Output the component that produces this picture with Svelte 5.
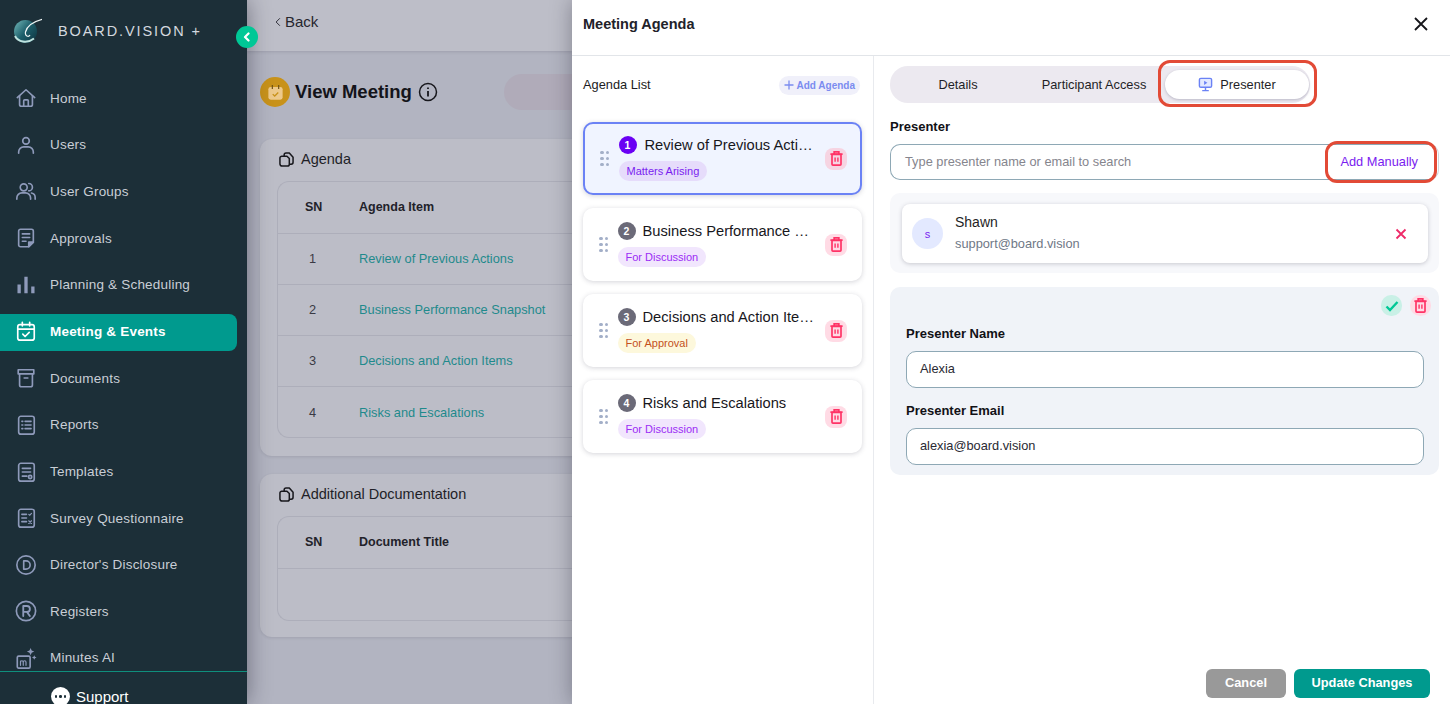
<script>
	const icons = {
		home: '<path d="M2.500 11.500 12 3l9.500 8.500"/><path d="M5 9.500V19a2 2 0 0 0 2 2h10a2 2 0 0 0 2-2V9.500"/><path d="M9.500 21v-6a1 1 0 0 1 1-1h3a1 1 0 0 1 1 1v6"/>',
		user: '<circle cx="12" cy="7.500" r="3.600"/><path d="M4 21v-1.500A5.500 5.500 0 0 1 9.500 14h5a5.500 5.500 0 0 1 5.500 5.500V21"/>',
		group: '<circle cx="9.500" cy="8" r="3.800"/><path d="M2 21v-1.500A5.500 5.500 0 0 1 7.500 14h4a5.500 5.500 0 0 1 5.500 5.500V21"/><path d="M15 3.800a4 4 0 0 1 0 8"/><path d="M18 14.200a5 5 0 0 1 4 5V21"/>',
		approval: '<path d="M15 21.500H6a2 2 0 0 1-2-2v-15a2 2 0 0 1 2-2h12a2 2 0 0 1 2 2V16.500z"/><path d="M8 7.500h8M8 11.500h8M8 15.500h4"/><path d="M15 21.500v-5h5z" fill="currentColor"/>',
		bars: '<path d="M4.500 11.500V21M12 3v18M19.500 13.500V21" stroke-width="3.600" stroke-linecap="butt"/>',
		calendar: '<rect x="3" y="5" width="18" height="17" rx="2.500"/><path d="M3 10h18M8 2.500v4M16 2.500v4"/><path d="m8.500 15.500 2.500 2.500 4.500-4.500"/>',
		archive: '<path d="M3.500 3h17v4.500h-17z"/><path d="M5 7.500v12a2 2 0 0 0 2 2h10a2 2 0 0 0 2-2v-12"/><path d="M10 12h4"/>',
		list: '<rect x="4" y="2.500" width="17" height="19.500" rx="2.500"/><path d="M11 8h6.500M11 12h6.500M11 16h6.500M7.500 8h1M7.500 12h1M7.500 16h1"/>',
		template: '<rect x="4" y="2.500" width="17" height="19.500" rx="2.500"/><path d="M8 8h9M8 12h9M8 16.500h5"/><circle cx="16.500" cy="17.500" r="1.800"/>',
		survey: '<rect x="4" y="2.500" width="17" height="19.500" rx="2.500"/><path d="M7.500 8h5M7.500 12h5M7.500 16h5"/><path d="m15 8 1 1 2-2M15 15l3 3M18 15l-3 3" stroke-width="1.200"/>',
		disclosure: '<circle cx="12" cy="12" r="10"/><path d="M9.500 7.500v9h2.500a4.500 4.500 0 0 0 0-9z"/>',
		register: '<circle cx="12" cy="12" r="10.500"/><path d="M9 17.500v-11h4a3.200 3.200 0 0 1 0 6.500H9M13 13l3.200 4.500" stroke-width="2"/>',
		minutes: '<rect x="2.500" y="10" width="14" height="13" rx="1.500"/><path d="M6 20v-4.500M6 16.500a1.500 1.500 0 0 1 3 0V20M9 16.500a1.500 1.500 0 0 1 3 0V20" stroke-width="1.300"/><path d="m17 1 1.200 2.800L21 5l-2.800 1.200L17 9l-1.200-2.800L13 5l2.800-1.200zM21 9l.8 1.700 1.700.8-1.700.8-.8 1.700-.8-1.700-1.700-.8 1.700-.8z" fill="currentColor" stroke="none"/>'
	};

	const nav = [
		{ label: 'Home', icon: 'home' },
		{ label: 'Users', icon: 'user' },
		{ label: 'User Groups', icon: 'group' },
		{ label: 'Approvals', icon: 'approval' },
		{ label: 'Planning & Scheduling', icon: 'bars' },
		{ label: 'Meeting & Events', icon: 'calendar', active: true },
		{ label: 'Documents', icon: 'archive' },
		{ label: 'Reports', icon: 'list' },
		{ label: 'Templates', icon: 'template' },
		{ label: 'Survey Questionnaire', icon: 'survey' },
		{ label: "Director's Disclosure", icon: 'disclosure' },
		{ label: 'Registers', icon: 'register' },
		{ label: 'Minutes AI', icon: 'minutes' }
	];

	const agenda = [
		{ title: 'Review of Previous Actions', tag: 'Matters Arising', tone: 'arising', active: true },
		{ title: 'Business Performance Snapshot', tag: 'For Discussion', tone: 'discuss' },
		{ title: 'Decisions and Action Items', tag: 'For Approval', tone: 'approve' },
		{ title: 'Risks and Escalations', tag: 'For Discussion', tone: 'discuss' }
	];
</script>

{#snippet trash()}
	<svg viewBox="0 0 16 16" width="15" height="15" fill="none" stroke="currentColor" stroke-width="1.800">
		<path d="M1.500 3.300h13M5.500 3V1h5v2" />
		<rect x="3.200" y="3.500" width="9.600" height="11.500" rx="1" />
		<path d="M6.500 7v4.500M9.500 7v4.500" stroke-width="1.500" />
	</svg>
{/snippet}

{#snippet docs()}
	<svg viewBox="0 0 16 16" width="15" height="15" fill="none" stroke="#17171c" stroke-width="1.600" stroke-linejoin="round">
		<path d="M5.500 4.500V3a2 2 0 0 1 2-2h3.500l4 4.500V11a2 2 0 0 1-2 2h-2" />
		<path d="M3 4.500h5.500L11 7v6a2 2 0 0 1-2 2H3.500A2.500 2.500 0 0 1 1 12.500v-6a2 2 0 0 1 2-2z" />
	</svg>
{/snippet}

<div class="page">
	<aside class="sidebar">
		<div class="brand">
			<svg class="logo" viewBox="0 0 30 30" width="30" height="30">
				<defs>
					<linearGradient id="lg" x1="0" y1="0.100" x2="0.900" y2="0.800">
						<stop offset="0" stop-color="#6db3b4" />
						<stop offset="0.55" stop-color="#1d5f6b" />
						<stop offset="1" stop-color="#123f4b" />
					</linearGradient>
				</defs>
				<circle cx="13.500" cy="15.500" r="11.500" fill="url(#lg)" />
				<path d="M3 20c3 6 12 8 19 2.500" fill="none" stroke="#bfe3df" stroke-width="2" />
				<path d="M31 3C23 5 15 9 13.500 16c-.8 4 3 5.500 4.500 3" fill="none" stroke="#eef5f5" stroke-width="1.200" />
			</svg>
			<span class="brand-name">BOARD.VISION +</span>
		</div>
		<nav class="nav">
			{#each nav as item}
				<div class="nav-item" class:active={item.active}>
					<svg class="nav-icon" viewBox="0 0 24 24" width="22" height="22" fill="none" stroke="currentColor" stroke-width="1.800" stroke-linecap="round" stroke-linejoin="round">
						{@html icons[item.icon]}
					</svg>
					<span>{item.label}</span>
				</div>
			{/each}
		</nav>
		<div class="support">
			<span class="support-bubble"><i></i><i></i><i></i></span>
			<span>Support</span>
		</div>
	</aside>

	<button class="collapse" aria-label="Collapse menu">
		<svg viewBox="0 0 10 10" width="10" height="10" fill="none" stroke="#fff" stroke-width="2.200" stroke-linecap="round" stroke-linejoin="round">
			<path d="M6.500 1.500 3 5l3.500 3.500" />
		</svg>
	</button>

	<main class="main">
		<div class="topbar">
			<svg viewBox="0 0 8 12" width="6" height="10" fill="none" stroke="#2b2b35" stroke-width="1.300"><path d="M6.500 1 1.500 6l5 5" /></svg>
			<span>Back</span>
		</div>
		<div class="content">
			<div class="title-row">
				<span class="title-icon">
					<svg viewBox="0 0 24 24" width="19" height="19">
						<rect x="3" y="5" width="18" height="16" rx="3" fill="#edc98a" />
						<path d="M8 2.500v5M16 2.500v5" stroke="#6f5216" stroke-width="1.500" />
						<path d="m8.500 14 2.500 2.500 4.500-4.500" fill="none" stroke="#c8921a" stroke-width="1.600" />
					</svg>
				</span>
				<h1>View Meeting</h1>
				<svg class="info" viewBox="0 0 20 20" width="20" height="20" fill="none" stroke="#17171c" stroke-width="1.500">
					<circle cx="10" cy="10" r="8.500" />
					<path d="M10 9v5.500M10 5.500v1.500" stroke-width="1.800" />
				</svg>
				<span class="title-pill"></span>
			</div>

			<section class="panel">
				<header class="panel-head">{@render docs()}<span>Agenda</span></header>
				<div class="table">
					<div class="row head"><span class="sn">SN</span><span class="item">Agenda Item</span></div>
					{#each agenda as row, i}
						<div class="row"><span class="sn num">{i + 1}</span><span class="item link">{row.title}</span></div>
					{/each}
				</div>
			</section>

			<section class="panel second">
				<header class="panel-head">{@render docs()}<span>Additional Documentation</span></header>
				<div class="table">
					<div class="row head"><span class="sn">SN</span><span class="item">Document Title</span></div>
					<div class="row empty"></div>
				</div>
			</section>
		</div>
	</main>

	<aside class="drawer">
		<header class="drawer-head">
			<h2>Meeting Agenda</h2>
			<svg viewBox="0 0 14 14" width="14" height="14" fill="none" stroke="#15151a" stroke-width="1.800"><path d="m1 1 12 12M13 1 1 13" /></svg>
		</header>
		<div class="drawer-body">
			<div class="agenda-col">
				<div class="agenda-top">
					<span class="agenda-heading">Agenda List</span>
					<button class="add-agenda">
						<svg viewBox="0 0 10 10" width="10" height="10" fill="none" stroke="#7b8cf0" stroke-width="1.300"><path d="M5 .5v9M.5 5h9" /></svg>
						Add Agenda
					</button>
				</div>
				<div class="agenda-list">
					{#each agenda as row, i}
						<div class="agenda-card" class:active={row.active}>
							<span class="grip"><i></i><i></i><i></i><i></i><i></i><i></i></span>
							<div class="agenda-text">
								<div class="agenda-title">
									<span class="badge">{i + 1}</span>
									<span class="agenda-name">{row.title}</span>
								</div>
								<span class="tag {row.tone}">{row.tag}</span>
							</div>
							<button class="icon-btn del" aria-label="Delete">{@render trash()}</button>
						</div>
					{/each}
				</div>
			</div>

			<div class="detail-col">
				<div class="tabs">
					<span class="tab details">Details</span>
					<span class="tab access">Participant Access</span>
					<span class="tab current">
						<svg viewBox="0 0 16 16" width="15" height="15" fill="none" stroke="#6b82f5" stroke-width="1.500">
							<rect x="1.500" y="1.500" width="13" height="9.500" rx="1.500" fill="#e3e9ff" />
							<path d="M8 11v3M4.500 14.500h7" />
							<path d="M6.500 4v4.500L10 6.200z" fill="#6b82f5" stroke="none" />
						</svg>
						Presenter
					</span>
					<span class="mark mark-tab"></span>
				</div>

				<div class="field-label top">Presenter</div>
				<div class="search">
					<span class="placeholder">Type presenter name or email to search</span>
					<span class="manual">Add Manually</span>
					<span class="mark mark-manual"></span>
				</div>

				<div class="chosen">
					<div class="person">
						<span class="avatar">s</span>
						<div class="person-text">
							<span class="person-name">Shawn</span>
							<span class="person-mail">support@board.vision</span>
						</div>
						<svg viewBox="0 0 12 12" width="12" height="12" fill="none" stroke="#ee2a68" stroke-width="1.800"><path d="m1.500 1.500 9 9M10.500 1.500l-9 9" /></svg>
					</div>
				</div>

				<div class="manual-form">
					<div class="form-actions">
						<button class="icon-btn ok" aria-label="Confirm">
							<svg viewBox="0 0 14 14" width="14" height="14" fill="none" stroke="#00c896" stroke-width="2.400"><path d="m1.500 7.500 3.500 3.500 7.500-8" /></svg>
						</button>
						<button class="icon-btn del" aria-label="Delete">{@render trash()}</button>
					</div>
					<div class="field-label">Presenter Name</div>
					<div class="input">Alexia</div>
					<div class="field-label second">Presenter Email</div>
					<div class="input">alexia@board.vision</div>
				</div>

				<div class="footer">
					<button class="btn cancel">Cancel</button>
					<button class="btn save">Update Changes</button>
				</div>
			</div>
		</div>
	</aside>
</div>

<style>
	:global(body) {
		margin: 0;
		font-family: "Liberation Sans", Arial, sans-serif;
	}
	.page {
		position: relative;
		display: flex;
		width: 1450px;
		height: 704px;
		overflow: hidden;
		background: #b2b4c1;
	}
	button {
		font-family: inherit;
		border: none;
		padding: 0;
	}

	/* sidebar */
	.sidebar {
		position: relative;
		z-index: 2;
		flex: 0 0 247px;
		display: flex;
		flex-direction: column;
		background: #1c2f38;
		box-shadow: 0 0 22px rgba(20, 20, 35, 0.45);
	}
	.brand {
		flex: 0 0 75px;
		display: flex;
		align-items: flex-start;
		padding: 16px 0 0 12px;
		box-sizing: border-box;
	}
	.brand-name {
		margin: 7px 0 0 16px;
		font-size: 14.500px;
		letter-spacing: 1.900px;
		color: #d3d8df;
	}
	.nav {
		flex: 1;
		min-height: 0;
		overflow: hidden;
	}
	.nav-item {
		display: flex;
		align-items: center;
		gap: 13px;
		height: 46.600px;
		padding-left: 15px;
		margin-right: 10px;
		font-size: 13.500px;
		letter-spacing: 0.200px;
		color: #c9ced6;
		box-sizing: border-box;
	}
	.nav-icon {
		color: #8e9aba;
		flex: none;
	}
	.nav-item.active {
		height: 37px;
		margin: 6px 10px 4.100px 0;
		padding-bottom: 2px;
		background: #009a8e;
		border-radius: 0 8px 8px 0;
		color: #fff;
		font-weight: 700;
	}
	.nav-item.active .nav-icon {
		color: #fff;
	}
	.support {
		flex: 0 0 33px;
		display: flex;
		align-items: center;
		gap: 6px;
		padding: 17px 0 0 51px;
		box-sizing: border-box;
		border-top: 1px solid #0f8f7d;
		font-size: 15px;
		color: #fff;
		line-height: 17px;
		overflow: hidden;
	}
	.support-bubble {
		display: flex;
		align-items: center;
		justify-content: center;
		gap: 2px;
		width: 19px;
		height: 19px;
		border-radius: 50%;
		background: #fff;
	}
	.support-bubble i {
		width: 2.500px;
		height: 2.500px;
		border-radius: 50%;
		background: #1c2f38;
	}
	.collapse {
		position: absolute;
		z-index: 3;
		left: 236px;
		top: 26px;
		display: flex;
		align-items: center;
		justify-content: center;
		width: 22px;
		height: 22px;
		border-radius: 50%;
		background: #00c896;
	}

	/* dimmed page behind the drawer */
	.main {
		flex: 1;
		min-width: 0;
		overflow: hidden;
	}
	.topbar {
		display: flex;
		align-items: center;
		gap: 4px;
		height: 51px;
		padding: 0 0 8px 28px;
		box-sizing: border-box;
		background: #bdbec8;
		box-shadow: 0 1px 3px rgba(40, 40, 60, 0.15);
		font-size: 15px;
		color: #26262e;
	}
	.content {
		padding: 23px 0 0 13px;
		width: 700px;
	}
	.title-row {
		display: flex;
		align-items: center;
		height: 36px;
		margin-bottom: 29px;
	}
	.title-icon {
		display: flex;
		align-items: center;
		justify-content: center;
		width: 30px;
		height: 30px;
		border-radius: 50%;
		background: #c8921a;
		margin-right: 5px;
	}
	h1 {
		margin: 0;
		font-size: 18.500px;
		font-weight: 700;
		color: #14141a;
	}
	.info {
		margin-left: 6px;
	}
	.title-pill {
		width: 200px;
		height: 36px;
		margin-left: 66px;
		border-radius: 18px;
		background: #b0abb9;
	}
	.panel {
		height: 317px;
		padding: 0 0 0 17px;
		box-sizing: border-box;
		border-radius: 12px 0 0 12px;
		background: #bcbdc7;
		box-shadow: 0 1px 3px rgba(40, 40, 60, 0.12);
	}
	.panel.second {
		height: 163px;
		margin-top: 18px;
	}
	.panel-head {
		display: flex;
		align-items: center;
		gap: 7px;
		height: 42px;
		padding: 0 0 2px 2px;
		box-sizing: border-box;
		font-size: 14.500px;
		color: #1f1f27;
	}
	.table {
		border: 1px solid #adaeba;
		border-right: none;
		border-radius: 12px 0 0 12px;
	}
	.row {
		display: flex;
		align-items: center;
		height: 51px;
		padding-bottom: 2px;
		border-top: 1px solid #adaeba;
		font-size: 12.800px;
		box-sizing: border-box;
	}
	.row:first-child {
		border-top: none;
	}
	.row:last-child {
		padding-bottom: 0;
	}
	.row.head {
		padding-bottom: 2px;
		font-size: 12.500px;
		font-weight: 700;
		color: #22222a;
	}
	.row.empty {
		height: 52px;
	}
	.sn {
		width: 27px;
		margin-left: 27px;
		flex: none;
	}
	.num {
		padding-left: 4px;
		box-sizing: border-box;
		color: #3a3a44;
	}
	.item {
		margin-left: 27px;
	}
	.link {
		color: #1f8a8c;
	}

	/* drawer */
	.drawer {
		position: relative;
		z-index: 2;
		flex: 0 0 878px;
		display: flex;
		flex-direction: column;
		background: #fff;
		box-shadow: 0 0 20px rgba(20, 20, 35, 0.35);
	}
	.drawer-head {
		flex: 0 0 56px;
		display: flex;
		align-items: center;
		justify-content: space-between;
		padding: 0 22px 8px 11px;
		box-sizing: border-box;
		border-bottom: 1px solid #e2e5e9;
	}
	h2 {
		margin: 0;
		font-size: 14.500px;
		font-weight: 700;
		color: #22222a;
	}
	.drawer-body {
		flex: 1;
		display: flex;
		min-height: 0;
	}
	.agenda-col {
		flex: 0 0 302px;
		padding: 19px 11px 0 11px;
		box-sizing: border-box;
		border-right: 1px solid #e8eaee;
	}
	.agenda-top {
		display: flex;
		align-items: center;
		justify-content: space-between;
		height: 20px;
		margin-bottom: 27px;
		padding-right: 2px;
		font-size: 12.800px;
		color: #1c1c22;
	}
	.agenda-heading {
		padding-bottom: 2px;
	}
	.add-agenda {
		display: flex;
		align-items: center;
		gap: 2px;
		height: 19px;
		padding: 0 5px;
		border-radius: 10px;
		background: #f0f0fa;
		color: #7b8cf0;
		font-size: 10px;
		font-weight: 700;
	}
	.agenda-list {
		display: flex;
		flex-direction: column;
		gap: 13px;
		width: 279px;
	}
	.agenda-card {
		display: flex;
		align-items: center;
		height: 73px;
		padding: 0 15px 0 16px;
		box-sizing: border-box;
		border-radius: 10px;
		background: #fff;
		box-shadow: 0 1px 5px rgba(60, 60, 80, 0.22);
	}
	.agenda-card.active {
		padding: 0 13px 0 15px;
		border: 2px solid #6b82f5;
		background: #f0f4ff;
	}
	.grip {
		display: grid;
		grid-template-columns: 3px 3px;
		gap: 2.500px;
		margin-right: 10px;
		flex: none;
	}
	.grip i {
		width: 3.500px;
		height: 3.500px;
		border-radius: 50%;
		background: #a3afc8;
	}
	.agenda-text {
		flex: 1;
		min-width: 0;
		display: flex;
		flex-direction: column;
		align-items: flex-start;
		gap: 7px;
		margin-top: -1px;
	}
	.agenda-title {
		display: flex;
		align-items: center;
		gap: 7px;
		width: 197px;
	}
	.active .agenda-title {
		gap: 8px;
		width: 195px;
	}
	.badge {
		flex: none;
		display: flex;
		align-items: center;
		justify-content: center;
		width: 18px;
		height: 18px;
		border-radius: 50%;
		background: #6b6a78;
		color: #fff;
		font-size: 10.500px;
		font-weight: 700;
	}
	.active .badge {
		background: #6a00f4;
	}
	.agenda-name {
		overflow: hidden;
		white-space: nowrap;
		text-overflow: ellipsis;
		font-size: 14.700px;
		color: #17171c;
	}
	.tag {
		padding: 0 8px;
		height: 20px;
		line-height: 20px;
		border-radius: 10px;
		font-size: 11px;
	}
	.arising {
		background: #e6dcfb;
		color: #7a1cf0;
	}
	.discuss {
		background: #f1e6fd;
		color: #9b2cf5;
	}
	.approve {
		background: #fdf8dc;
		color: #c4501c;
	}
	.icon-btn {
		flex: none;
		display: flex;
		align-items: center;
		justify-content: center;
		width: 22px;
		height: 22px;
		border-radius: 8px;
	}
	.del {
		background: #ffdbe5;
		color: #ff3366;
	}
	.active .del {
		background: #f6d4e2;
	}
	.ok {
		background: #c9f0e6;
	}

	.detail-col {
		flex: 1;
		min-width: 0;
		display: flex;
		flex-direction: column;
		padding: 10px 11px 6px 16px;
		box-sizing: border-box;
	}
	.tabs {
		position: relative;
		display: flex;
		align-items: center;
		width: 420px;
		height: 37px;
		border-radius: 18px;
		background: #ece9f0;
		font-size: 12.800px;
		color: #1f1f27;
	}
	.tab {
		display: flex;
		align-items: center;
		justify-content: center;
	}
	.details {
		width: 136px;
		padding-bottom: 1px;
	}
	.access {
		width: 136px;
		padding-bottom: 1px;
	}
	.current {
		gap: 7px;
		width: 144px;
		height: 29px;
		margin-left: 3px;
		border-radius: 15px;
		background: #fff;
		box-shadow: 0 1px 3px rgba(70, 70, 100, 0.3);
	}
	.mark {
		position: absolute;
		border: 3px solid #e24a36;
		box-sizing: border-box;
		pointer-events: none;
	}
	.mark-tab {
		left: 268px;
		top: -6px;
		width: 159px;
		height: 47px;
		border-radius: 12px;
	}
	.field-label {
		font-size: 13px;
		font-weight: 700;
		line-height: 14px;
		color: #111116;
	}
	.field-label.top {
		margin: 17px 0 10px;
	}
	.field-label.second {
		margin-top: 16px;
	}
	.search {
		position: relative;
		display: flex;
		align-items: center;
		justify-content: space-between;
		height: 36px;
		padding: 0 20px 2px 14px;
		box-sizing: border-box;
		border: 1px solid #8ea8b5;
		border-right-color: #cfd8de;
		border-radius: 10px;
		font-size: 12.800px;
	}
	.placeholder {
		color: #85858d;
	}
	.manual {
		color: #7a1cf0;
	}
	.mark-manual {
		right: 1px;
		top: -4px;
		width: 112px;
		height: 42px;
		border-radius: 12px;
	}
	.chosen {
		margin-top: 13px;
		padding: 11px 11px 10px 12px;
		border-radius: 10px;
		background: #f7f8fb;
	}
	.person {
		display: flex;
		align-items: center;
		height: 59px;
		padding: 0 21px 0 10px;
		box-sizing: border-box;
		border-radius: 8px;
		background: #fff;
		box-shadow: 0 1px 4px rgba(60, 60, 80, 0.25);
	}
	.avatar {
		display: flex;
		align-items: center;
		justify-content: center;
		width: 31px;
		height: 31px;
		border-radius: 50%;
		background: #e3e9ff;
		color: #7a1cf0;
		font-size: 11px;
	}
	.person-text {
		flex: 1;
		display: flex;
		flex-direction: column;
		gap: 6px;
		margin-left: 12px;
		padding-bottom: 3px;
	}
	.person-name {
		font-size: 14px;
		color: #1f1f27;
	}
	.person-mail {
		font-size: 12.800px;
		color: #6f7886;
	}
	.manual-form {
		margin-top: 14px;
		padding: 8px 15px 10px 16px;
		border-radius: 10px;
		background: #f0f3f8;
	}
	.form-actions {
		display: flex;
		justify-content: flex-end;
		gap: 8px;
		margin: 0 -7px 11px 0;
	}
	.form-actions .icon-btn {
		width: 21px;
		height: 21px;
		border-radius: 10px;
	}
	.input {
		display: flex;
		align-items: center;
		height: 37px;
		margin-top: 10px;
		padding: 0 0 2px 13px;
		box-sizing: border-box;
		border: 1px solid #8ea8b5;
		border-radius: 10px;
		background: #fff;
		font-size: 12.800px;
		color: #2a2a33;
	}
	.footer {
		display: flex;
		justify-content: flex-end;
		gap: 8px;
		margin-top: auto;
		padding-right: 9px;
	}
	.btn {
		height: 29px;
		padding-bottom: 2px;
		border-radius: 6px;
		color: #fff;
		font-size: 12.800px;
		font-weight: 700;
	}
	.cancel {
		width: 80px;
		background: #999;
	}
	.save {
		width: 136px;
		background: #009a8e;
	}
</style>
